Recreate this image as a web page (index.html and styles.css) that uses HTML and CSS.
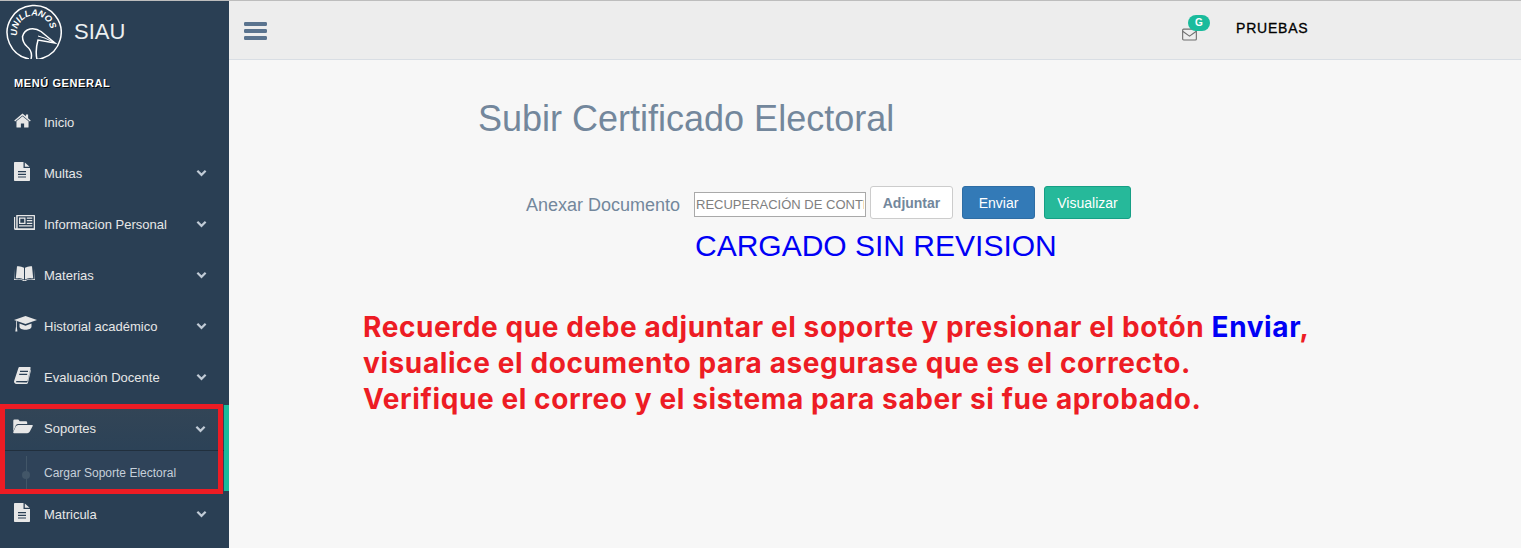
FILE: index.html
```html
<!DOCTYPE html>
<html lang="es">
<head>
    <meta charset="UTF-8">
    <title>SIAU</title>
    <link rel="stylesheet" href="styles.css">
</head>
<body>
    <aside class="sidebar">
        <div class="brand">
            <!-- viewBox origin keeps the drawing in page coordinates -->
            <svg class="logo" viewBox="6 2.5 56 56" aria-hidden="true">
                <defs><path id="logo-arc" d="M17.300 35 A17 17 0 1 1 50 37.800"/></defs>
                <path class="logo-line" d="M29 58.500 A27 27 0 1 1 43 57.500 Q40 59 37 59 Q35 50 38 39.500 L55 42.500 Q47 36 41 31 Q36 27.500 30 28.500 Q24 30 22.500 36 Q22.500 42 27 46 Q33 51 31 58.500"/>
                <path class="logo-line thin" d="M38 35.500 Q45 37 52 41"/>
                <text class="logo-text"><textPath href="#logo-arc">UNILLANOS</textPath></text>
            </svg>
            <span class="brand-name">SIAU</span>
        </div>
        <h3 class="menu-title">MENÚ GENERAL</h3>
        <ul class="menu">
            <li class="menu-item">
                <span class="icon-slot"><svg class="icon icon-home" viewBox="0 0 20 17"><path d="M10 3.600 2.900 9.400V16a.7.7 0 0 0 .7.7h4.500v-4.600h3.800v4.600h4.500a.7.7 0 0 0 .7-.7V9.400Z"/><path d="M10 .4.300 8.500l1 1.200L10 2.600l8.700 7.100 1-1.200-3.100-2.600V1.300H14v2.300Z"/></svg></span>
                <span class="menu-label">Inicio</span>
            </li>
            <li class="menu-item">
                <span class="icon-slot"><svg class="icon icon-file" viewBox="0 0 16 19"><path fill-rule="evenodd" d="M0 .8A.8.800 0 0 1 .8 0H9.500v6H16v12.200a.8.800 0 0 1-.8.800H.8a.8.800 0 0 1-.8-.8ZM4 9v1.200h8V9Zm0 2.700v1.200h8v-1.200Zm0 2.700v1.200h8v-1.200Z"/><path d="M10.800.4 15.600 4.800h-4.800Z"/></svg></span>
                <span class="menu-label">Multas</span>
                <svg class="chevron" viewBox="0 0 12 8"><path d="M1.500 1.500 6 6l4.500-4.500"/></svg>
            </li>
            <li class="menu-item">
                <span class="icon-slot"><svg class="icon icon-news" viewBox="0 0 21 15"><path fill-rule="evenodd" d="M2.500 0h18a.5.5 0 0 1 .5.500v14a.5.5 0 0 1-.5.500H1.500A1.500 1.500 0 0 1 0 13.500V2h1.200v11.300h1V.5a.5.5 0 0 1 .3-.5Zm1.200 1.300v12h16v-12ZM5 2.500h6.500v6.500H5Zm1.300 1.300v3.900h3.900V3.800ZM12.800 2.500h5.500v1.200h-5.500Zm0 2.600h5.500v1.200h-5.500Zm0 2.600h5.500v1.200h-5.500ZM5 10.300h13.300v1.200H5Z"/></svg></span>
                <span class="menu-label">Informacion Personal</span>
                <svg class="chevron" viewBox="0 0 12 8"><path d="M1.500 1.500 6 6l4.500-4.500"/></svg>
            </li>
            <li class="menu-item">
                <span class="icon-slot"><svg class="icon icon-open" viewBox="0 0 21 15"><path d="M10 1.800Q6.500-.4 3 .3L1.800 12.300Q6.500 11.200 10 13.500Z"/><path d="M11 1.800Q14.500-.4 18 .3l1.200 12Q14.500 11.200 11 13.500Z"/><path d="M.8 2.500 0 14q6-1.300 9.500 1h2q3.500-2.300 9.500-1l-.8-11.500.3 10.600q-5.500-1-10 1.200-4.500-2.200-10-1.200Z"/></svg></span>
                <span class="menu-label">Materias</span>
                <svg class="chevron" viewBox="0 0 12 8"><path d="M1.500 1.500 6 6l4.500-4.500"/></svg>
            </li>
            <li class="menu-item">
                <span class="icon-slot"><svg class="icon icon-cap" viewBox="0 0 23 16"><path d="M11.500 0 0 4l11.500 4L23 4Z"/><path d="M5.500 7.600v3.200c0 1.700 2.800 3 6 3s6-1.300 6-3V7.600l-6 2.100Z"/><path d="M2 5v5.500L1.300 15.500H3.400L2.800 10.500V5.300Z"/></svg></span>
                <span class="menu-label">Historial académico</span>
                <svg class="chevron" viewBox="0 0 12 8"><path d="M1.500 1.500 6 6l4.500-4.500"/></svg>
            </li>
            <li class="menu-item">
                <span class="icon-slot"><svg class="icon icon-book" viewBox="0 0 17 17"><path fill-rule="evenodd" d="M4.500.8A1 1 0 0 1 5.500 0H15.800a.8.800 0 0 1 .8 1L13.700 13.200a1.200 1.200 0 0 1-1.200.9H3a1 1 0 0 0-1 1.200l10.500.2a1 1 0 0 0 1-.8l3-12.200.5.600-3 12.500a1.400 1.400 0 0 1-1.400 1.400H2.500A2.500 2.500 0 0 1 .1 13.900ZM6 3.800v1.200h8V3.800Zm-.8 3v1.200h8V6.800Z"/></svg></span>
                <span class="menu-label">Evaluación Docente</span>
                <svg class="chevron" viewBox="0 0 12 8"><path d="M1.500 1.500 6 6l4.500-4.500"/></svg>
            </li>
            <li class="menu-group">
                <div class="menu-item active">
                    <span class="icon-slot"><svg class="icon icon-folder" viewBox="0 0 21 15"><path d="M.3 12.800V1.500A1.300 1.300 0 0 1 1.600.2h4l1.500 1.800h6.500a1.300 1.300 0 0 1 1.300 1.300v1.500H5.500a3 3 0 0 0-2.500 1.300Z"/><path d="M5.500 5.800H20a.8.800 0 0 1 .7 1.200L17.500 13a3 3 0 0 1-2.500 1.500H1a.8.8 0 0 1-.7-1.200L3 7.300a3 3 0 0 1 2.500-1.500Z"/></svg></span>
                    <span class="menu-label">Soportes</span>
                    <svg class="chevron" viewBox="0 0 12 8"><path d="M1.500 1.500 6 6l4.500-4.500"/></svg>
                </div>
                <div class="submenu">
                    <span class="sub-dot"></span>
                    <span>Cargar Soporte Electoral</span>
                </div>
                <div class="highlight"></div>
            </li>
            <li class="menu-item">
                <span class="icon-slot"><svg class="icon icon-file" viewBox="0 0 16 19"><path fill-rule="evenodd" d="M0 .8A.8.800 0 0 1 .8 0H9.500v6H16v12.200a.8.800 0 0 1-.8.800H.8a.8.800 0 0 1-.8-.8ZM4 9v1.200h8V9Zm0 2.700v1.200h8v-1.200Zm0 2.700v1.200h8v-1.200Z"/><path d="M10.800.4 15.600 4.800h-4.800Z"/></svg></span>
                <span class="menu-label">Matricula</span>
                <svg class="chevron" viewBox="0 0 12 8"><path d="M1.500 1.500 6 6l4.500-4.500"/></svg>
            </li>
        </ul>
    </aside>

    <div class="page">
        <header class="topbar">
            <svg class="burger" viewBox="0 0 23 18"><path d="M1.300 0h20.400a1.300 1.300 0 0 1 1.300 1.300v1.400A1.300 1.300 0 0 1 21.700 4H1.300A1.300 1.300 0 0 1 0 2.700V1.300A1.300 1.300 0 0 1 1.300 0Zm0 7h20.400A1.300 1.300 0 0 1 23 8.300v1.400a1.300 1.300 0 0 1-1.300 1.300H1.300A1.300 1.300 0 0 1 0 9.700V8.300A1.300 1.300 0 0 1 1.300 7Zm0 7h20.400a1.300 1.300 0 0 1 1.300 1.300v1.400a1.300 1.300 0 0 1-1.300 1.300H1.300A1.300 1.300 0 0 1 0 16.700v-1.400A1.300 1.300 0 0 1 1.300 14Z"/></svg>
            <div class="mail">
                <svg class="mail-icon" viewBox="0 0 16 13"><rect x="0.700" y="0.700" width="14.600" height="11.600" rx="1"/><path d="M.7 3 8 8.200 15.300 3"/></svg>
                <span class="badge">G</span>
            </div>
            <span class="user">PRUEBAS</span>
        </header>

        <main class="content">
            <h1 class="title">Subir Certificado Electoral</h1>
            <form class="upload-row">
                <label class="upload-label" for="doc">Anexar Documento</label>
                <input class="upload-input" id="doc" type="text" value="RECUPERACIÓN DE CONTRASEÑA.pdf">
                <button class="btn btn-default" type="button">Adjuntar</button>
                <button class="btn btn-primary" type="button">Enviar</button>
                <button class="btn btn-success" type="button">Visualizar</button>
            </form>
            <p class="status">CARGADO SIN REVISION</p>
            <p class="notice">Recuerde que debe adjuntar el soporte y presionar el botón <span class="notice-key">Enviar</span>,<br>visualice el documento para asegurase que es el correcto.<br>Verifique el correo y el sistema para saber si fue aprobado.</p>
        </main>
    </div>
</body>
</html>
```

FILE: styles.css
```css
html, body {
    height: 100%;
    margin: 0;
    overflow: hidden;
}

body {
    display: flex;
    font-family: "Liberation Sans", Arial, sans-serif;
    background: #f7f7f7;
    border-top: 1px solid #bdbdbd;
    box-sizing: border-box;
    color: #73879c;
}

/* --- sidebar --- */
.sidebar {
    width: 229px;
    flex: none;
    background: #2a3f54;
    color: #e7e7e7;
}
.brand {
    display: flex;
    align-items: center;
    height: 59px;
    padding-left: 6px;
}
.logo {
    width: 56px;
    height: 56px;
    flex: none;
}
.logo-line {
    fill: none;
    stroke: #fff;
    stroke-width: 1.5;
}
.logo-line.thin {
    stroke-width: 1;
}
.logo-text {
    font-size: 9px;
    font-weight: 700;
    font-style: italic;
    fill: #fff;
}
.brand-name {
    margin: 3px 0 0 12px;
    font-size: 22px;
    color: #ecf0f1;
}
.menu-title {
    margin: 16px 0 0 14px;
    font-size: 11px;
    line-height: 14px;
    letter-spacing: 0.6px;
    font-weight: 700;
    color: #fff;
    text-shadow: 1px 1px #000;
}
.menu {
    list-style: none;
    margin: 9px 0 0;
    padding: 0;
}
.menu-item {
    display: flex;
    align-items: center;
    height: 46px;
    margin-bottom: 5px;
    box-sizing: border-box;
    padding: 0 22px 0 14px;
    font-size: 13px;
    color: #e7e7e7;
}
.icon-slot {
    display: flex;
    align-items: center;
    width: 30px;
    flex: none;
}
.menu-label {
    flex: 1;
}
.icon {
    flex: none;
    fill: #e7e7e7;
    position: relative;
    top: -2px;
}
.icon-home { width: 17px; height: 15px; }
.icon-file { width: 16px; height: 19px; }
.icon-news { width: 21px; height: 15px; }
.icon-open { width: 21px; height: 15px; }
.icon-cap { width: 23px; height: 16px; }
.icon-book { width: 17px; height: 17px; }
.icon-folder { width: 20px; height: 15px; margin-left: -1px; margin-right: 1px; }
.chevron {
    width: 11px;
    height: 8px;
    fill: none;
    stroke: #c1cbd6;
    stroke-width: 2.4;
}

.menu-group {
    position: relative;
    height: 86px;
    border-right: 5px solid #1abb9c;
    background: #2f4359;
}
.menu-group .menu-item {
    margin: 0;
    padding: 2px 18px 0 14px;
    background: linear-gradient(#334556, #2c4257);
    border-bottom: 1px solid #212f3d;
}
.submenu {
    position: relative;
    display: flex;
    align-items: center;
    height: 40px;
    padding: 3px 0 0 44px;
    box-sizing: border-box;
    font-size: 12px;
    color: #c6d0da;
}
.submenu::before {
    content: "";
    position: absolute;
    left: 26px;
    top: 5px;
    bottom: 0;
    width: 1px;
    background: #425668;
}
.sub-dot {
    position: absolute;
    left: 22px;
    top: 20px;
    width: 8px;
    height: 8px;
    border-radius: 50%;
    background: #425668;
}
.highlight {
    position: absolute;
    left: 0;
    top: -1px;
    width: 223px;
    height: 90px;
    box-sizing: border-box;
    border: 5px solid #ed1c24;
}

/* --- top bar --- */
.page {
    flex: 1;
    min-width: 0;
}
.topbar {
    display: flex;
    align-items: center;
    height: 58px;
    background: #ededed;
    border-bottom: 1px solid #d9dee4;
}
.burger {
    width: 23px;
    height: 18px;
    margin: 2px 0 0 15px;
    fill: #5a738e;
}
.mail {
    position: relative;
    margin-left: 915px;
    width: 15px;
    height: 13px;
    top: 4px;
}
.mail-icon {
    display: block;
    width: 15px;
    height: 13px;
    fill: none;
    stroke: #6f6f6f;
    stroke-width: 1.2;
}
.badge {
    position: absolute;
    left: 6px;
    top: -13px;
    width: 22px;
    height: 16px;
    border-radius: 8px;
    background: #1abb9c;
    color: #fff;
    font-size: 10px;
    font-weight: 700;
    line-height: 16px;
    text-align: center;
}
.user {
    margin: -4px 0 0 39px;
    font-size: 14px;
    letter-spacing: 0.8px;
    color: #000;
    -webkit-text-stroke: 0.3px #000;
}

/* --- content --- */
.content {
    padding-top: 37px;
}
.title {
    margin: 0 0 0 249px;
    font-size: 36px;
    line-height: 44px;
    font-weight: 400;
    color: #73879c;
}
.upload-row {
    display: flex;
    align-items: center;
    margin: 45px 0 0 297px;
}
.upload-label {
    width: 168px;
    font-size: 18px;
    position: relative;
    top: 3px;
}
.upload-input {
    width: 172px;
    height: 25px;
    box-sizing: border-box;
    margin-right: 4px;
    padding: 1px 1px;
    border: 1px solid #a9a9a9;
    background: #fff;
    font-family: inherit;
    font-size: 13px;
    color: #808080;
    position: relative;
    top: 2px;
}
.btn {
    height: 33px;
    box-sizing: border-box;
    border: 1px solid transparent;
    border-radius: 3px;
    font-family: inherit;
    font-size: 14px;
    margin-right: 9px;
}
.btn-default {
    width: 83px;
    background: #fff;
    border-color: #ccc;
    color: #73879c;
    font-weight: 700;
}
.btn-primary {
    width: 73px;
    background: #337ab7;
    border-color: #2e6da4;
    color: #fff;
}
.btn-success {
    width: 87px;
    background: #26b99a;
    border-color: #169f85;
    color: #fff;
}
.status {
    margin: 9px 0 0 466px;
    font-size: 30px;
    line-height: 36px;
    color: #0000f5;
}
.notice {
    margin: 45px 0 0 134px;
    font-family: Inter, "Liberation Sans", sans-serif;
    font-size: 28px;
    letter-spacing: 0.6px;
    line-height: 36px;
    font-weight: 700;
    color: #ed1c24;
}
.notice-key {
    color: #0000f5;
}
```
